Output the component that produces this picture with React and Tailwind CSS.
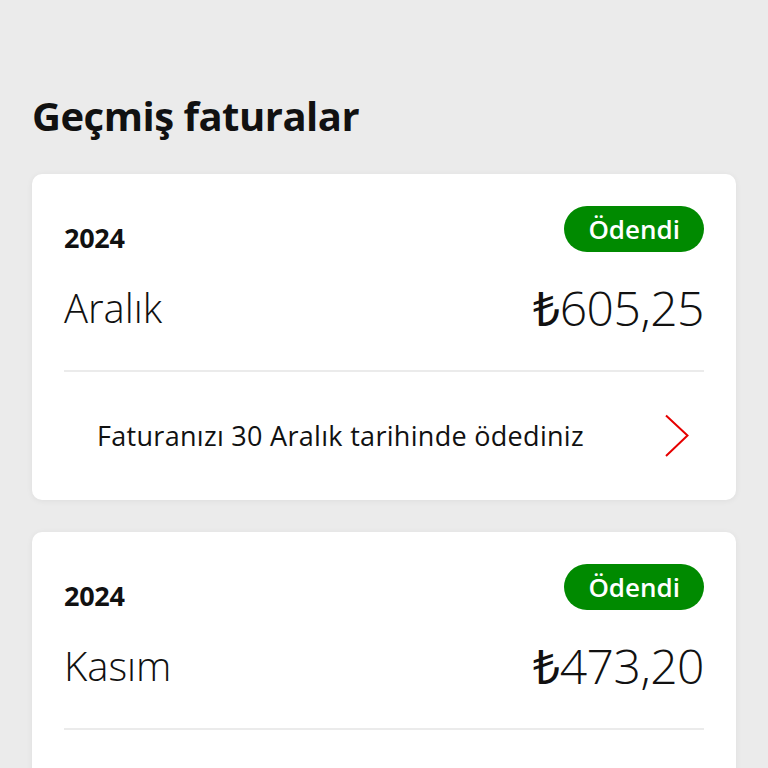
import React from "react";

function Chevron() {
  return (
    <svg width="26" height="44" viewBox="0 0 26 44" fill="none">
      <path d="M2 1.5 L23.5 21.5 L2 42" stroke="#e60000" strokeWidth="2" strokeLinejoin="miter" />
    </svg>
  );
}

function Card({ month, amount, date }) {
  return (
    <div className="bg-white rounded-[10px] shadow-[0_1px_6px_rgba(0,0,0,0.06)] px-8 pt-8">
      <div className="flex justify-between h-[46px]">
        <span className="text-[27px] font-bold text-[#111] leading-[32px] mt-[16px] tracking-[-0.3px]">2024</span>
        <span className="h-[46px] px-[24px] rounded-full bg-[#008a00] text-white text-[26px] font-semibold flex items-center">
          Ödendi
        </span>
      </div>
      <div className="flex items-center justify-between mt-[28px] h-[56px]">
        <span className="text-[40px] font-light text-[#111]">{month}</span>
        <span className="text-[48px] font-light text-[#111] tracking-[-0.5px]">
          <span className="font-normal">₺</span>{amount}
        </span>
      </div>
      <div className="mt-[34px] h-[2px] bg-[#ebebeb]" />
      <div className="h-[128px] flex items-center justify-between pl-[33px] pr-[14px]">
        <span className="text-[27px] text-[#111] tracking-[0.3px]">{date}</span>
        <Chevron />
      </div>
    </div>
  );
}

export default function App() {
  return (
    <div
      className="min-h-screen bg-[#ebebeb] px-8 pt-[88px] pb-10"
      style={{ fontFamily: '"Open Sans", "Noto Sans", sans-serif' }}
    >
      <h1 className="text-[40px] font-bold text-[#111] leading-[52px] tracking-[-0.5px] mt-[2px]">Geçmiş faturalar</h1>
      <div className="mt-[32px] flex flex-col gap-8">
        <Card month="Aralık" amount="605,25" date="Faturanızı 30 Aralık tarihinde ödediniz" />
        <Card month="Kasım" amount="473,20" date="Faturanızı 30 Kasım tarihinde ödediniz" />
      </div>
    </div>
  );
}
